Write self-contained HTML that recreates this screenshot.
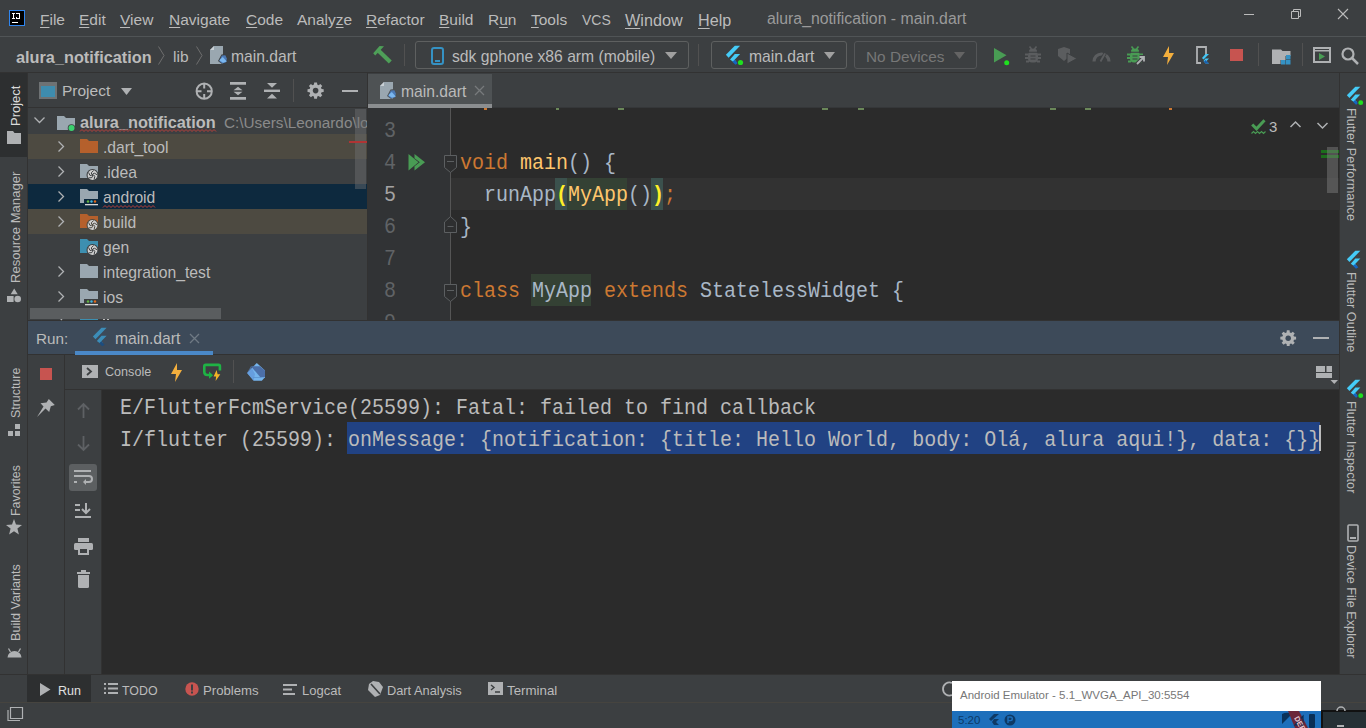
<!DOCTYPE html>
<html><head><meta charset="utf-8">
<style>
*{margin:0;padding:0;box-sizing:border-box}
html,body{width:1366px;height:728px;overflow:hidden;background:#3C3F41;font-family:"Liberation Sans",sans-serif;color:#BBBBBB;position:relative}
.a{position:absolute}
.t{position:absolute;white-space:nowrap;font-size:15px;line-height:18px}
.mono{position:absolute;font-family:"Liberation Mono",monospace;font-size:20px;line-height:32px;white-space:pre;transform-origin:0 20px;transform:translateY(2px) scaleY(1.1)}
svg{position:absolute;overflow:visible}
.menu .t{top:11px;font-size:15.5px}
.menu u{text-decoration:underline;text-underline-offset:2px;text-decoration-thickness:1px}
.vl{position:absolute;white-space:nowrap;font-size:13px;line-height:14px;transform-origin:0 0;transform:rotate(-90deg)}
.vr{position:absolute;white-space:nowrap;font-size:13px;line-height:14px;transform-origin:0 0;transform:rotate(90deg)}
</style></head><body>
<!-- ============ TITLE BAR ============ -->
<div class="a" style="left:0;top:36px;width:1366px;height:1px;background:#505456"></div>
<div class="a" style="left:9px;top:10px;width:16px;height:16px;background:#000;border:1px solid #2F86F0"></div>
<div class="a" style="left:12px;top:13px;width:3px;height:1px;background:#fff"></div>
<div class="a" style="left:13px;top:13px;width:1px;height:6px;background:#fff"></div>
<div class="a" style="left:12px;top:18px;width:3px;height:1px;background:#fff"></div>
<div class="a" style="left:19px;top:13px;width:1px;height:6px;background:#fff"></div>
<div class="a" style="left:16px;top:13px;width:4px;height:1px;background:#fff"></div>
<div class="a" style="left:16px;top:18px;width:4px;height:1px;background:#fff"></div>
<div class="a" style="left:16px;top:17px;width:1px;height:1px;background:#fff"></div>
<div class="a" style="left:12px;top:22px;width:6px;height:1px;background:#fff"></div>
<div class="menu">
<span class="t" style="left:40px"><u>F</u>ile</span>
<span class="t" style="left:79px"><u>E</u>dit</span>
<span class="t" style="left:120px"><u>V</u>iew</span>
<span class="t" style="left:169px"><u>N</u>avigate</span>
<span class="t" style="left:246px"><u>C</u>ode</span>
<span class="t" style="left:297px">Analy<u>z</u>e</span>
<span class="t" style="left:366px"><u>R</u>efactor</span>
<span class="t" style="left:439px"><u>B</u>uild</span>
<span class="t" style="left:488px">R<u>u</u>n</span>
<span class="t" style="left:531px"><u>T</u>ools</span>
<span class="t" style="left:582px;font-size:14px">VCS</span>
<span class="t" style="left:625px;font-size:16.2px"><u>W</u>indow</span>
<span class="t" style="left:698px;font-size:16.2px"><u>H</u>elp</span>
</div>
<span class="t" style="left:767px;top:10px;font-size:15.8px;color:#9A9A9A">alura_notification - main.dart</span>
<div class="a" style="left:1244px;top:14px;width:10px;height:1px;background:#BBBBBB"></div>
<svg style="left:1291px;top:9px" width="10" height="10"><path d="M0.5 2.5h7v7h-7z M2.5 2.5v-2h7v7h-2" fill="none" stroke="#BBBBBB" stroke-width="1"/></svg>
<svg style="left:1338px;top:9px" width="10" height="10"><path d="M0 0L10 10M10 0L0 10" stroke="#BBBBBB" stroke-width="1.1"/></svg>

<!-- ============ NAV TOOLBAR ============ -->
<div class="a" style="left:0;top:72px;width:1366px;height:1px;background:#323232"></div>
<span class="t" style="left:16px;top:48px;font-weight:bold;font-size:16.3px">alura_notification</span>
<svg style="left:158px;top:46px" width="7" height="19"><path d="M0.5 0.5L6 9.5L0.5 18.5" fill="none" stroke="#6E6E6E" stroke-width="1"/></svg>
<span class="t" style="left:173px;top:48px;font-size:15.5px">lib</span>
<svg style="left:196px;top:46px" width="7" height="19"><path d="M0.5 0.5L6 9.5L0.5 18.5" fill="none" stroke="#6E6E6E" stroke-width="1"/></svg>
<svg style="left:210px;top:46px" width="18" height="20"><path d="M4 0h9v18h-13v-14z" fill="#9AA7B0"/><path d="M0 4L4 0v4z" fill="#C9D0D5"/><path d="M11.5 8.5l4-0.5l2 4l-1 4.5l-4.5 1.5l-4-3z" fill="#3C3F41"/><path d="M11.8 9.5l3.5-0.3l1.6 3.4l-0.8 3.6l-3.8 1.2l-3-2.2z" fill="#4C79B5"/><path d="M9.2 14.2l3.6-3.2l4 4.5l-3.8 1.2z" fill="#7AB7EF"/></svg>
<span class="t" style="left:231px;top:48px;font-size:15.7px">main.dart</span>
<!-- hammer -->
<svg style="left:372px;top:45px" width="21" height="20"><path d="M1.2 8.2L7.6 1L12 1.2L9 4.6L3.2 10.5z" fill="#4E9F58"/><path d="M6.6 5.7L18.3 17" stroke="#4E9F58" stroke-width="4.2"/></svg>
<div class="a" style="left:404px;top:44px;width:1px;height:22px;background:#515151"></div>
<!-- device combo -->
<div class="a" style="left:415px;top:41px;width:274px;height:28px;border:1px solid #5E6060;border-radius:3px;background:#3C3F41"></div>
<svg style="left:431px;top:47px" width="13" height="18"><rect x="1" y="1" width="11" height="16" rx="2" fill="none" stroke="#3592C4" stroke-width="2"/><rect x="4" y="13" width="5" height="2" fill="#3592C4"/></svg>
<span class="t" style="left:452px;top:48px;font-size:15.7px">sdk gphone x86 arm (mobile)</span>
<svg style="left:665px;top:52px" width="12" height="7"><path d="M0 0h12L6 7z" fill="#A0A0A0"/></svg>
<div class="a" style="left:698px;top:44px;width:1px;height:22px;background:#515151"></div>
<!-- main.dart combo -->
<div class="a" style="left:711px;top:41px;width:136px;height:28px;border:1px solid #5E6060;border-radius:3px"></div>
<svg style="left:725px;top:45px" width="21" height="22"><g transform="scale(1.0)"><path d="M0.9 9.8L9.8 0.8H15.1L3.6 12.7z" fill="#45CBF7"/><path d="M5 14.4L9.8 9H15.1L9.6 14.8L11.2 16.5L9.8 18z" fill="#45CBF7"/><path d="M7.4 16.7L9.6 14.8L13 18.2L10.5 19.8z" fill="#1565C0"/><circle cx="15.5" cy="17.5" r="3.4" fill="#3C3F41"/><circle cx="15.5" cy="17.5" r="2.6" fill="#1FE01F"/></g></svg>
<span class="t" style="left:749px;top:48px;font-size:15.7px">main.dart</span>
<svg style="left:824px;top:52px" width="11" height="7"><path d="M0 0h11L5.5 7z" fill="#A0A0A0"/></svg>
<!-- no devices -->
<div class="a" style="left:854px;top:41px;width:123px;height:28px;border:1px solid #545658;border-radius:3px"></div>
<span class="t" style="left:866px;top:48px;font-size:15.35px;color:#777777">No Devices</span>
<svg style="left:954px;top:52px" width="11" height="7"><path d="M0 0h11L5.5 7z" fill="#646464"/></svg>
<!-- run -->
<svg style="left:994px;top:48px" width="16" height="17"><path d="M0 0L12.5 7.2L0 14.4z" fill="#499C54"/><circle cx="12.7" cy="14.7" r="2.5" fill="#1FE01F"/></svg>
<!-- debug grey -->
<svg style="left:1025px;top:46px" width="16" height="17"><path d="M4.5 0.5l2 2.5M11.5 0.5l-2 2.5" stroke="#5B5D5F" stroke-width="1.6"/><ellipse cx="8" cy="5" rx="4" ry="2.6" fill="#5B5D5F"/><rect x="3" y="5.5" width="10" height="11" rx="4" fill="#5B5D5F"/><path d="M0 8.5h3.5M12.5 8.5h3.5M0 12h3.5M12.5 12h3.5M1 15.5h3M12 15.5h3" stroke="#5B5D5F" stroke-width="1.8"/><path d="M5.5 10h5M5.5 13h5M3 6.2h10" stroke="#3C3F41" stroke-width="1.1"/></svg>
<!-- coverage -->
<svg style="left:1058px;top:47px" width="20" height="17"><path d="M0 2L6 0L12 2V9L6 14L0 9z" fill="#5B5D5F"/><path d="M9 6L19 11.5L9 17z" fill="#5B5D5F" stroke="#3C3F41" stroke-width="1"/></svg>
<!-- profiler -->
<svg style="left:1092px;top:49px" width="19" height="13"><path d="M2 12.5A7.5 7.5 0 0 1 17 12.5" fill="none" stroke="#5B5D5F" stroke-width="3.2"/><path d="M8.5 12.5l4.5-8" stroke="#3C3F41" stroke-width="3.5"/><path d="M8.5 12.5l4.5-8" stroke="#5B5D5F" stroke-width="1.8"/></svg>
<!-- attach debugger green -->
<svg style="left:1127px;top:46px" width="19" height="19"><path d="M4.5 0.5l2 2.5M11.5 0.5l-2 2.5" stroke="#499C54" stroke-width="1.6"/><ellipse cx="8" cy="5" rx="4" ry="2.6" fill="#499C54"/><rect x="3" y="5.5" width="10" height="11" rx="4" fill="#499C54"/><path d="M0 8.5h3.5M12.5 8.5h3.5M0 12h3.5M12.5 12h3.5M1 15.5h3M12 15.5h3" stroke="#499C54" stroke-width="1.8"/><path d="M5.5 10h5M5.5 13h5M3 6.2h10" stroke="#3C3F41" stroke-width="1.1"/><path d="M10 18L17 11M12.5 11H17V15.5" stroke="#3C3F41" stroke-width="4"/><path d="M10 18L17 11M12.5 11H17V15.5" stroke="#AFB1B3" stroke-width="1.8" fill="none"/></svg>
<!-- lightning -->
<svg style="left:1163px;top:46px" width="12" height="19"><path d="M6 0L0 11h5L4 19L11 7H6z" fill="#F4AF3D"/></svg>
<!-- flutter device -->
<svg style="left:1196px;top:46px" width="14" height="19"><path d="M1 10V1h9v8M1 10v7h4" fill="none" stroke="#AFB1B3" stroke-width="1.8"/><path d="M9.5 8h3.5L7.5 13.5L6 12z" fill="#42C6F5"/><path d="M9.5 12.5h3.5l-2.5 2.5l2.5 2.5H9.5L7.5 15z" fill="#42C6F5"/><path d="M8 15.5l1.5-1.5l3.5 3.5H9.5z" fill="#1A5DAE"/></svg>
<!-- stop -->
<div class="a" style="left:1230px;top:49px;width:13px;height:12px;background:#C75450"></div>
<div class="a" style="left:1258px;top:43px;width:1px;height:23px;background:#515151"></div>
<!-- project structure -->
<svg style="left:1272px;top:48px" width="19" height="17"><path d="M0 1.5h9l1.5 1.5h8v5h-5v4h-5v4H0z" fill="#AFB1B3"/><rect x="14" y="7" width="4.5" height="4.5" fill="#3592C4"/><rect x="9" y="12" width="4.5" height="4.5" fill="#3592C4"/><rect x="14" y="12" width="4.5" height="4.5" fill="#3592C4"/></svg>
<div class="a" style="left:1302px;top:43px;width:1px;height:23px;background:#515151"></div>
<!-- run anything -->
<svg style="left:1313px;top:47px" width="18" height="16"><rect x="1" y="1" width="16" height="14" fill="none" stroke="#AFB1B3" stroke-width="2"/><rect x="1" y="3" width="16" height="1.5" fill="#AFB1B3"/><path d="M6 6L12 9.5L6 13z" fill="#499C54"/></svg>
<!-- search -->
<svg style="left:1341px;top:47px" width="18" height="18"><circle cx="7" cy="7" r="5.5" fill="none" stroke="#AFB1B3" stroke-width="2.2"/><path d="M11 11L17 17" stroke="#AFB1B3" stroke-width="2.5"/></svg>

<!-- ============ LEFT STRIP ============ -->
<div class="a" style="left:0;top:73px;width:27px;height:84px;background:#2D2F30"></div>
<div class="a" style="left:27px;top:73px;width:1px;height:601px;background:#323232"></div>

<!-- ============ PROJECT PANEL ============ -->
<div class="a" style="left:28px;top:107px;width:339px;height:1px;background:#323232"></div>

<!-- ============ EDITOR ============ -->
<div class="a" style="left:367px;top:73px;width:1px;height:247px;background:#323232"></div>
<div class="a" style="left:368px;top:108px;width:82px;height:212px;background:#313335"></div>
<div class="a" style="left:450px;top:108px;width:889px;height:212px;background:#2B2B2B"></div>

<!-- ============ RUN PANEL ============ -->
<div class="a" style="left:28px;top:320px;width:1311px;height:1px;background:#323232"></div>
<div class="a" style="left:28px;top:321px;width:1311px;height:33px;background:#3D4A59"></div>
<div class="a" style="left:28px;top:354px;width:1311px;height:1px;background:#323232"></div>
<div class="a" style="left:102px;top:390px;width:1237px;height:284px;background:#2B2B2B"></div>


<!-- left strip labels -->
<span class="vl" style="left:9px;top:126px;color:#DADADA;font-size:13px">Project</span>
<svg style="left:7px;top:131px" width="14" height="13"><path d="M0 0h6l1.5 2H14v11H0z" fill="#AFB1B3"/></svg>
<span class="vl" style="left:9px;top:283px;font-size:13.1px">Resource Manager</span>
<svg style="left:7px;top:288px" width="15" height="15"><path d="M7.2 0.4L10.7 6.2H3.7z" fill="#AFB1B3"/><rect x="0" y="8" width="6.6" height="6" fill="#AFB1B3"/><circle cx="10.7" cy="11" r="3.3" fill="#AFB1B3"/></svg>
<span class="vl" style="left:9px;top:418px;font-size:12.4px">Structure</span>
<svg style="left:8px;top:424px" width="13" height="13"><rect x="7" y="0" width="5" height="5" fill="#AFB1B3"/><rect x="0" y="7" width="5" height="5" fill="#AFB1B3"/><rect x="7" y="7" width="5" height="5" fill="#AFB1B3"/></svg>
<span class="vl" style="left:9px;top:516px;font-size:12.4px">Favorites</span>
<svg style="left:6px;top:519px" width="16" height="16"><path d="M8 0L10 5.5L16 5.9L11.4 9.6L12.9 15.4L8 12.2L3.1 15.4L4.6 9.6L0 5.9L6 5.5z" fill="#AFB1B3"/></svg>
<span class="vl" style="left:9px;top:641px;font-size:12.6px">Build Variants</span>
<svg style="left:7px;top:645px" width="15" height="13"><path d="M0.5 12.5A7 6.5 0 0 1 14.5 12.5z" fill="#AFB1B3"/><path d="M3.5 7L1.5 3.5M11.5 7L13.5 3.5" stroke="#AFB1B3" stroke-width="1.3"/></svg>

<!-- right strip labels -->
<svg style="left:1346px;top:86px" width="20" height="20"><g transform="scale(0.95)"><path d="M0.9 9.8L9.8 0.8H15.1L3.6 12.7z" fill="#45CBF7"/><path d="M5 14.4L9.8 9H15.1L9.6 14.8L11.2 16.5L9.8 18z" fill="#45CBF7"/><path d="M7.4 16.7L9.6 14.8L13 18.2L10.5 19.8z" fill="#1565C0"/><circle cx="15.5" cy="17.5" r="3.4" fill="#3C3F41"/><circle cx="15.5" cy="17.5" r="2.6" fill="#1FE01F"/></g></svg>
<span class="vr" style="left:1358px;top:108px;font-size:12.8px">Flutter Performance</span>
<svg style="left:1346px;top:250px" width="20" height="20"><g transform="scale(0.95)"><path d="M0.9 9.8L9.8 0.8H15.1L3.6 12.7z" fill="#45CBF7"/><path d="M5 14.4L9.8 9H15.1L9.6 14.8L11.2 16.5L9.8 18z" fill="#45CBF7"/><path d="M7.4 16.7L9.6 14.8L13 18.2L10.5 19.8z" fill="#1565C0"/></g></svg>
<span class="vr" style="left:1358px;top:272px;font-size:12.8px">Flutter Outline</span>
<svg style="left:1346px;top:379px" width="20" height="20"><g transform="scale(0.95)"><path d="M0.9 9.8L9.8 0.8H15.1L3.6 12.7z" fill="#45CBF7"/><path d="M5 14.4L9.8 9H15.1L9.6 14.8L11.2 16.5L9.8 18z" fill="#45CBF7"/><path d="M7.4 16.7L9.6 14.8L13 18.2L10.5 19.8z" fill="#1565C0"/><circle cx="15.5" cy="17.5" r="3.4" fill="#3C3F41"/><circle cx="15.5" cy="17.5" r="2.6" fill="#1FE01F"/></g></svg>
<span class="vr" style="left:1358px;top:401px;font-size:12.8px">Flutter Inspector</span>
<svg style="left:1347px;top:524px" width="12" height="18"><rect x="1" y="1" width="10" height="16" rx="1" fill="none" stroke="#AFB1B3" stroke-width="1.6"/><rect x="3" y="13" width="6" height="2" fill="#AFB1B3"/></svg>
<span class="vr" style="left:1358px;top:545px;font-size:12.7px">Device File Explorer</span>

<!-- project header -->
<svg style="left:39px;top:82px" width="18" height="18"><rect x="0" y="0" width="18" height="17" fill="#6E7274"/><rect x="2" y="4" width="14" height="11" fill="#3E8CAE"/></svg>
<span class="t" style="left:62px;top:82px;font-size:15.5px">Project</span>
<svg style="left:121px;top:88px" width="12" height="7"><path d="M0 0h11L5.5 7z" fill="#AFB1B3"/></svg>
<svg style="left:195px;top:82px" width="19" height="19"><circle cx="9.2" cy="9.2" r="7.6" fill="none" stroke="#AFB1B3" stroke-width="2"/><path d="M9.2 2v4.5M9.2 12v4.5M2 9.2h4.5M12 9.2h4.5" stroke="#AFB1B3" stroke-width="2"/></svg>
<svg style="left:230px;top:82px" width="16" height="18"><path d="M0 1.4h16M0 16.4h16" stroke="#AFB1B3" stroke-width="2.8"/><path d="M3.5 8.2l4.5-3.5l4.5 3.5zM3.5 9.8l4.5 3.5l4.5-3.5z" fill="#AFB1B3"/></svg>
<svg style="left:264px;top:82px" width="16" height="18"><path d="M0 8.8h16" stroke="#AFB1B3" stroke-width="2.4"/><path d="M3 1h10l-5 4.8zM3 16.6h10l-5-4.8z" fill="#AFB1B3"/></svg>
<div class="a" style="left:293px;top:79px;width:1px;height:23px;background:#515151"></div>
<svg style="left:307px;top:82px" width="18" height="18"><path d="M14.58 6.95 L16.68 7.19 L16.68 10.01 L14.58 10.25 L13.99 11.66 L15.31 13.32 L13.32 15.31 L11.66 13.99 L10.25 14.58 L10.01 16.68 L7.19 16.68 L6.95 14.58 L5.54 13.99 L3.88 15.31 L1.89 13.32 L3.21 11.66 L2.62 10.25 L0.52 10.01 L0.52 7.19 L2.62 6.95 L3.21 5.54 L1.89 3.88 L3.88 1.89 L5.54 3.21 L6.95 2.62 L7.19 0.52 L10.01 0.52 L10.25 2.62 L11.66 3.21 L13.32 1.89 L15.31 3.88 L13.99 5.54Z" fill="#AFB1B3"/><circle cx="8.6" cy="8.6" r="2.8" fill="#3C3F41"/><circle cx="8.6" cy="8.6" r="2.8" fill="none" stroke="#3C3F41" stroke-width="0"/></svg>
<div class="a" style="left:342px;top:90px;width:16px;height:2.3px;background:#AFB1B3"></div>

<!-- project tree -->
<div class="a" style="left:28px;top:134px;width:339px;height:25px;background:#4D4A41"></div>
<div class="a" style="left:28px;top:184px;width:339px;height:25px;background:#0D293E"></div>
<div class="a" style="left:28px;top:209px;width:339px;height:25px;background:#4D4A41"></div>
<!-- root -->
<svg style="left:34px;top:117px" width="11" height="7"><path d="M0.5 0.5L5.5 5.5L10.5 0.5" fill="none" stroke="#AFB1B3" stroke-width="1.3"/></svg>
<svg style="left:57px;top:116px" width="19" height="16"><path d="M0 0h7l2 2h9v12H0z" fill="#9AA7B0"/><circle cx="14.5" cy="12" r="3.8" fill="#3C3F41"/><circle cx="14.5" cy="12" r="3" fill="#3BD16F"/></svg>
<span class="t" style="left:80px;top:113px;font-weight:bold;font-size:16.3px">alura_notification</span>
<svg style="left:80px;top:129px" width="136" height="4"><path d="M0 2.5 l2 -2 l2 2 l2 -2 l2 2 l2 -2 l2 2 l2 -2 l2 2 l2 -2 l2 2 l2 -2 l2 2 l2 -2 l2 2 l2 -2 l2 2 l2 -2 l2 2 l2 -2 l2 2 l2 -2 l2 2 l2 -2 l2 2 l2 -2 l2 2 l2 -2 l2 2 l2 -2 l2 2 l2 -2 l2 2 l2 -2 l2 2 l2 -2 l2 2 l2 -2 l2 2 l2 -2 l2 2 l2 -2 l2 2 l2 -2 l2 2 l2 -2 l2 2 l2 -2 l2 2 l2 -2 l2 2 l2 -2 l2 2 l2 -2 l2 2 l2 -2 l2 2 l2 -2 l2 2 l2 -2 l2 2 l2 -2 l2 2 l2 -2 l2 2 l2 -2 l2 2 l2 -2 l2 2" fill="none" stroke="#BC3F3C" stroke-width="1"/></svg>
<div class="a" style="left:224px;top:108px;width:131px;height:25px;overflow:hidden"><span class="t" style="left:0;top:6px;font-size:15.3px;color:#8A8A8A">C:\Users\Leonardo\lo</span></div><div class="a" style="left:355px;top:108px;width:12px;height:25px;overflow:hidden"><span class="t" style="left:-131px;top:6px;font-size:15.3px;color:#8A8A8A">C:\Users\Leonardo\lo</span></div>
<!-- children -->
<svg style="left:58px;top:141px" width="7" height="11"><path d="M0.5 0.5L5.5 5.5L0.5 10.5" fill="none" stroke="#AFB1B3" stroke-width="1.3"/></svg>
<svg style="left:80px;top:139px" width="18" height="14"><path d="M0 0h7l2 2h9v12H0z" fill="#B5602C"/></svg>
<span class="t" style="left:103px;top:139px;font-size:15.7px">.dart_tool</span>

<svg style="left:58px;top:166px" width="7" height="11"><path d="M0.5 0.5L5.5 5.5L0.5 10.5" fill="none" stroke="#AFB1B3" stroke-width="1.3"/></svg>
<svg style="left:80px;top:164px" width="19" height="17"><path d="M0 0h7l2 2h9v12H0z" fill="#9AA7B0"/><circle cx="12.5" cy="11" r="6" fill="#3C3F41"/><circle cx="12.5" cy="11" r="4.9" fill="#D0D0D0"/><path d="M13.70 11.00 Q15.64 11.64 14.17 15.29 M12.87 12.14 Q12.86 14.18 8.94 13.91 M11.53 11.71 Q9.59 12.33 8.63 8.51 M11.53 10.29 Q10.34 8.64 13.67 6.55 M12.87 9.86 Q14.07 8.21 17.09 10.74 " fill="none" stroke="#3C3F41" stroke-width="1"/><circle cx="12.5" cy="11" r="1.1" fill="#3C3F41"/></svg>
<span class="t" style="left:103px;top:164px;font-size:15.7px">.idea</span>

<svg style="left:58px;top:191px" width="7" height="11"><path d="M0.5 0.5L5.5 5.5L0.5 10.5" fill="none" stroke="#AFB1B3" stroke-width="1.3"/></svg>
<svg style="left:80px;top:189px" width="19" height="17"><path d="M0 0h7l2 2h9v12H0z" fill="#9AA7B0"/><rect x="4" y="10" width="15" height="7" fill="#0D293E"/><rect x="5" y="15" width="13" height="1.3" fill="#D6D6D6"/><circle cx="8" cy="12.5" r="1.2" fill="#62B543"/><circle cx="11.5" cy="12.5" r="1.2" fill="#40B6E0"/><circle cx="15" cy="12.5" r="1.2" fill="#E46A1A"/></svg>
<span class="t" style="left:103px;top:189px;font-size:15.7px">android</span>
<svg style="left:103px;top:205px" width="52" height="4"><path d="M0 2.5 l2 -2 l2 2 l2 -2 l2 2 l2 -2 l2 2 l2 -2 l2 2 l2 -2 l2 2 l2 -2 l2 2 l2 -2 l2 2 l2 -2 l2 2 l2 -2 l2 2 l2 -2 l2 2 l2 -2 l2 2 l2 -2 l2 2 l2 -2 l2 2" fill="none" stroke="#BC3F3C" stroke-width="1"/></svg>

<svg style="left:58px;top:216px" width="7" height="11"><path d="M0.5 0.5L5.5 5.5L0.5 10.5" fill="none" stroke="#AFB1B3" stroke-width="1.3"/></svg>
<svg style="left:80px;top:214px" width="19" height="17"><path d="M0 0h7l2 2h9v12H0z" fill="#B5602C"/><circle cx="12.5" cy="11" r="6" fill="#4D4A41"/><circle cx="12.5" cy="11" r="4.9" fill="#D0D0D0"/><path d="M13.70 11.00 Q15.64 11.64 14.17 15.29 M12.87 12.14 Q12.86 14.18 8.94 13.91 M11.53 11.71 Q9.59 12.33 8.63 8.51 M11.53 10.29 Q10.34 8.64 13.67 6.55 M12.87 9.86 Q14.07 8.21 17.09 10.74 " fill="none" stroke="#4D4A41" stroke-width="1"/><circle cx="12.5" cy="11" r="1.1" fill="#4D4A41"/></svg>
<span class="t" style="left:103px;top:214px;font-size:15.7px">build</span>

<svg style="left:80px;top:239px" width="19" height="17"><path d="M0 0h7l2 2h9v12H0z" fill="#3D8FB0"/><circle cx="12.5" cy="11" r="6" fill="#3C3F41"/><circle cx="12.5" cy="11" r="4.9" fill="#D0D0D0"/><path d="M13.70 11.00 Q15.64 11.64 14.17 15.29 M12.87 12.14 Q12.86 14.18 8.94 13.91 M11.53 11.71 Q9.59 12.33 8.63 8.51 M11.53 10.29 Q10.34 8.64 13.67 6.55 M12.87 9.86 Q14.07 8.21 17.09 10.74 " fill="none" stroke="#3C3F41" stroke-width="1"/><circle cx="12.5" cy="11" r="1.1" fill="#3C3F41"/></svg>
<span class="t" style="left:103px;top:239px;font-size:15.7px">gen</span>

<svg style="left:58px;top:266px" width="7" height="11"><path d="M0.5 0.5L5.5 5.5L0.5 10.5" fill="none" stroke="#AFB1B3" stroke-width="1.3"/></svg>
<svg style="left:80px;top:264px" width="18" height="14"><path d="M0 0h7l2 2h9v12H0z" fill="#9AA7B0"/></svg>
<span class="t" style="left:103px;top:264px;font-size:15.7px">integration_test</span>

<svg style="left:58px;top:291px" width="7" height="11"><path d="M0.5 0.5L5.5 5.5L0.5 10.5" fill="none" stroke="#AFB1B3" stroke-width="1.3"/></svg>
<svg style="left:80px;top:289px" width="19" height="17"><path d="M0 0h7l2 2h9v12H0z" fill="#9AA7B0"/><rect x="4" y="10" width="15" height="7" fill="#3C3F41"/><rect x="5" y="15" width="13" height="1.3" fill="#D6D6D6"/><circle cx="8" cy="12.5" r="1.2" fill="#62B543"/><circle cx="11.5" cy="12.5" r="1.2" fill="#40B6E0"/><circle cx="15" cy="12.5" r="1.2" fill="#E46A1A"/></svg>
<span class="t" style="left:103px;top:289px;font-size:15.7px">ios</span>
<!-- lib partially -->
<svg style="left:58px;top:316px" width="7" height="4"><path d="M0.5 0.5L4 4" fill="none" stroke="#AFB1B3" stroke-width="1.3"/></svg>
<div class="a" style="left:80px;top:314px;width:18px;height:6px;background:#3D8FB0"></div>
<span class="a" style="left:103px;top:316px;width:12px;height:4px;overflow:hidden"><span class="a" style="left:0;top:0;width:2px;height:4px;background:#BBBBBB"></span><span class="a" style="left:4px;top:0;width:2px;height:4px;background:#BBBBBB"></span></span>
<!-- scrollbars -->
<div class="a" style="left:355px;top:109px;width:11px;height:80px;background:rgba(110,113,115,0.45)"></div>
<div class="a" style="left:349px;top:141px;width:18px;height:2px;background:#B03434"></div>
<div class="a" style="left:30px;top:308px;width:191px;height:11px;background:#5A5D5F"></div>
<!-- ============ BOTTOM ============ -->
<div class="a" style="left:0;top:674px;width:1366px;height:1px;background:#323232"></div>
<div class="a" style="left:0;top:702px;width:1366px;height:1px;background:#46443F"></div>
<div class="a" style="left:1339px;top:73px;width:1px;height:601px;background:#323232"></div>

<!-- editor tabs -->
<div class="a" style="left:368px;top:74px;width:124px;height:34px;background:#4E5254"></div>
<div class="a" style="left:368px;top:104px;width:124px;height:4px;background:#8B8E90"></div>
<svg style="left:380px;top:82px" width="17" height="20"><path d="M4 0h9v17H0V4z" fill="#9AA7B0"/><path d="M0 4L4 0v4z" fill="#C9D0D5"/><path d="M10.5 7.5l4-0.5l2 4l-1 4.5l-4.5 1.5l-4-3z" fill="#4E5254"/><path d="M10.8 8.5l3.5-0.3l1.6 3.4l-0.8 3.6l-3.8 1.2l-3-2.2z" fill="#4C79B5"/><path d="M8.2 13.2l3.6-3.2l4 4.5l-3.8 1.2z" fill="#7AB7EF"/></svg>
<span class="t" style="left:401px;top:83px;font-size:15.7px">main.dart</span>
<svg style="left:475px;top:86px" width="10" height="10"><path d="M0 0L9 9M9 0L0 9" stroke="#777A7C" stroke-width="1.3"/></svg>

<!-- editor gutter/code -->
<div class="a" style="left:450px;top:178px;width:889px;height:32px;background:#323232"></div>
<div class="a" style="left:450px;top:108px;width:1px;height:212px;background:#555555"></div>
<div class="a" style="left:492px;top:107px;width:847px;height:1px;background:#353739"></div>
<!-- line 2 remnants -->
<div class="a" style="left:484px;top:108px;width:3px;height:1.5px;background:#CC7832"></div>
<div class="a" style="left:556px;top:108px;width:3px;height:1.5px;background:#6A8759"></div>
<div class="a" style="left:618px;top:108px;width:6px;height:1.5px;background:#6A8759"></div>
<div class="a" style="left:822px;top:108px;width:6px;height:1.5px;background:#6A8759"></div>
<div class="a" style="left:858px;top:108px;width:6px;height:1.5px;background:#6A8759"></div>
<div class="a" style="left:1050px;top:108px;width:6px;height:1.5px;background:#6A8759"></div>
<div class="a" style="left:1085px;top:108px;width:6px;height:1.5px;background:#6A8759"></div>
<div class="a" style="left:1169px;top:108px;width:3px;height:1.5px;background:#CC7832"></div>
<div class="mono" style="left:384px;top:114px;color:#606366">3</div>
<div class="mono" style="left:384px;top:146px;color:#606366">4</div>
<div class="mono" style="left:384px;top:178px;color:#A4A3A3">5</div>
<div class="mono" style="left:384px;top:210px;color:#606366">6</div>
<div class="mono" style="left:384px;top:242px;color:#606366">7</div>
<div class="mono" style="left:384px;top:274px;color:#606366">8</div>
<div class="a" style="left:368px;top:306px;width:971px;height:14px;overflow:hidden"><div class="mono" style="left:16px;top:0;color:#606366">9</div></div>
<!-- run gutter icon -->
<svg style="left:408px;top:154px" width="18" height="17"><path d="M0.5 0L10.5 8.2L0.5 16.4z" fill="#499C54"/><path d="M6.5 0L17 8.2L6.5 16.4V12.2L11.8 8.2L6.5 4.2z" fill="#499C54"/></svg>
<!-- fold markers -->
<svg style="left:444px;top:155px" width="13" height="18"><path d="M0.5 0.5h12v12l-6 5l-6-5z" fill="#2E2F30" stroke="#5C5F61" stroke-width="1"/><path d="M3 6.5h7" stroke="#5C5F61" stroke-width="1"/></svg>
<svg style="left:444px;top:216px" width="13" height="18"><path d="M0.5 16.5h12v-10.5l-6-5.5l-6 5.5z" fill="#2E2F30" stroke="#5C5F61" stroke-width="1"/><path d="M3.5 10.5h6" stroke="#5C5F61" stroke-width="1"/></svg>
<svg style="left:444px;top:284px" width="13" height="18"><path d="M0.5 0.5h12v12l-6 5l-6-5z" fill="#2E2F30" stroke="#5C5F61" stroke-width="1"/><path d="M3 6.5h7" stroke="#5C5F61" stroke-width="1"/></svg>
<!-- code -->
<div class="mono" style="left:460px;top:146px;color:#A9B7C6"><span style="color:#CC7832">void</span> <span style="color:#FFC66D">main</span>() {</div>
<div class="a" style="left:555px;top:178px;width:12px;height:32px;background:#3B514D"></div>
<div class="a" style="left:567px;top:178px;width:60px;height:32px;background:#344134"></div>
<div class="a" style="left:651px;top:178px;width:12px;height:32px;background:#3B514D"></div>
<div class="mono" style="left:460px;top:178px;color:#A9B7C6">  runApp<span style="color:#FFEF28;font-weight:bold">(</span><span style="color:#FFC66D">MyApp</span>()<span style="color:#FFEF28;font-weight:bold">)</span><span style="color:#CC7832">;</span></div>
<div class="mono" style="left:460px;top:210px;color:#A9B7C6">}</div>
<div class="a" style="left:531px;top:274px;width:60px;height:32px;background:#344134"></div>
<div class="mono" style="left:460px;top:274px;color:#A9B7C6"><span style="color:#CC7832">class</span> MyApp <span style="color:#CC7832">extends</span> StatelessWidget {</div>
<!-- editor top-right -->
<svg style="left:1251px;top:119px" width="16" height="16"><path d="M1.2 5.5L5.5 9.8L13.5 1.2" fill="none" stroke="#499C54" stroke-width="3"/><path d="M0.5 14.5l2-2l2 2l2-2l2 2l2-2l2 2l2-2" fill="none" stroke="#499C54" stroke-width="1.1"/></svg>
<span class="t" style="left:1269px;top:118px;font-size:15px">3</span>
<svg style="left:1290px;top:121px" width="11" height="7"><path d="M0.5 6L5.5 1L10.5 6" fill="none" stroke="#AFB1B3" stroke-width="1.5"/></svg>
<svg style="left:1317px;top:122px" width="11" height="7"><path d="M0.5 1L5.5 6L10.5 1" fill="none" stroke="#AFB1B3" stroke-width="1.5"/></svg>
<div class="a" style="left:1321px;top:150px;width:18px;height:3px;background:#1C6E1C"></div>
<div class="a" style="left:1321px;top:155px;width:18px;height:3px;background:#1C6E1C"></div>
<div class="a" style="left:1327px;top:147px;width:11px;height:46px;background:rgba(130,130,130,0.45)"></div>

<!-- ============ RUN PANEL CONTENT ============ -->
<span class="t" style="left:36px;top:330px;font-size:15.25px">Run:</span>
<svg style="left:92px;top:327px" width="17" height="21"><g transform="scale(0.97)"><path d="M0.9 9.8L9.8 0.8H15.1L3.6 12.7z" fill="#3C8DB8"/><path d="M5 14.4L9.8 9H15.1L9.6 14.8L11.2 16.5L9.8 18z" fill="#3C8DB8"/><path d="M7.4 16.7L9.6 14.8L13 18.2L10.5 19.8z" fill="#1D4D7E"/></g></svg>
<span class="t" style="left:115px;top:330px;font-size:15.7px">main.dart</span>
<svg style="left:190px;top:334px" width="10" height="10"><path d="M0 0L9 9M9 0L0 9" stroke="#6F7A84" stroke-width="1.3"/></svg>
<div class="a" style="left:75px;top:351px;width:138px;height:4px;background:#4A88C7"></div>
<svg style="left:1280px;top:330px" width="18" height="18"><path d="M13.98 6.60 L16.08 6.82 L16.08 9.58 L13.98 9.80 L13.42 11.16 L14.75 12.80 L12.80 14.75 L11.16 13.42 L9.80 13.98 L9.58 16.08 L6.82 16.08 L6.60 13.98 L5.24 13.42 L3.60 14.75 L1.65 12.80 L2.98 11.16 L2.42 9.80 L0.32 9.58 L0.32 6.82 L2.42 6.60 L2.98 5.24 L1.65 3.60 L3.60 1.65 L5.24 2.98 L6.60 2.42 L6.82 0.32 L9.58 0.32 L9.80 2.42 L11.16 2.98 L12.80 1.65 L14.75 3.60 L13.42 5.24Z" fill="#AFB1B3"/><circle cx="8.2" cy="8.2" r="2.7" fill="#3D4A59"/><circle cx="8.2" cy="8.2" r="2.7" fill="none" stroke="#3D4A59" stroke-width="0"/></svg>
<div class="a" style="left:1313px;top:337px;width:16px;height:2px;background:#AFB1B3"></div>
<!-- left col -->
<div class="a" style="left:64px;top:355px;width:1px;height:319px;background:#323232"></div>
<div class="a" style="left:40px;top:368px;width:12.4px;height:12.4px;background:#C75450"></div>
<svg style="left:36px;top:398px" width="20" height="20"><path d="M12.8 1L18.8 7L14.8 8.2L13.2 14L9.5 10.5L1 19L7.5 8.5L4.5 5.3L10.5 4.5z" fill="#AFB1B3"/></svg>
<!-- console toolbar -->
<div class="a" style="left:65px;top:389px;width:1274px;height:1px;background:#323232"></div>
<svg style="left:82px;top:365px" width="16" height="14"><rect x="0" y="0" width="16" height="13" fill="#AFB1B3"/><path d="M5 3L9 6.5L5 10" fill="none" stroke="#3C3F41" stroke-width="1.8"/></svg>
<span class="t" style="left:105px;top:363px;font-size:12.6px">Console</span>
<svg style="left:171px;top:363px" width="12" height="19"><path d="M6 0L0 11h5L4 19L11 7H6z" fill="#F4AF3D"/></svg>
<svg style="left:203px;top:364px" width="19" height="19"><path d="M16.9 6.6V2.2Q16.9 0.9 15.6 0.9H2.6Q1.3 0.9 1.3 2.2V8Q1.3 11 4.3 11H7" fill="none" stroke="#1FB345" stroke-width="2.6"/><path d="M6 7.6L10.1 11.2L6 14.8z" fill="#1FB345"/><path d="M13.6 6L10.6 12.5H13.1L12.6 17.1L17.3 10.3H14.6z" fill="#F4B526"/></svg>
<div class="a" style="left:233px;top:360px;width:1px;height:23px;background:#515151"></div>
<svg style="left:246px;top:362px" width="20" height="20"><path d="M1.1 10.9L10.8 1L19 8.6V15.3L15.8 18.8H7.6z" fill="#75B4EC"/><path d="M4.9 4.2H13.7L19 8.6V15.3H14.3z" fill="#4C6FA8"/><path d="M1.1 10.9L4.9 4.2L9 12L7.6 18.8z" fill="#5C8FD6" opacity="0.6"/><path d="M7 15.5H15.5" stroke="#5A93CF" stroke-width="0.8"/></svg>
<svg style="left:1316px;top:366px" width="23" height="19"><rect x="0" y="0" width="9" height="6" fill="#AFB1B3"/><rect x="10.5" y="0" width="5.5" height="6" fill="#AFB1B3"/><rect x="0" y="7" width="16" height="5" fill="#AFB1B3"/><path d="M14.5 14h7.5l-3.75 4z" fill="#AFB1B3"/></svg>
<!-- col2 -->
<div class="a" style="left:101px;top:390px;width:1px;height:284px;background:#323232"></div>
<svg style="left:77px;top:403px" width="13" height="15"><path d="M6.5 1V15M1 6.5L6.5 1L12 6.5" fill="none" stroke="#5E6164" stroke-width="1.8"/></svg>
<svg style="left:77px;top:436px" width="13" height="15"><path d="M6.5 0V14M1 8.5L6.5 14L12 8.5" fill="none" stroke="#5E6164" stroke-width="1.8"/></svg>
<div class="a" style="left:69px;top:464px;width:28px;height:27px;background:#5C5F61;border-radius:3px"></div>
<svg style="left:74px;top:470px" width="18" height="16"><path d="M0 1h17M0 6h15a3 3 0 0 1 0 6h-5" fill="none" stroke="#AFB1B3" stroke-width="2"/><path d="M9 12l3-3v6z" fill="#AFB1B3"/><path d="M0 12h3" stroke="#AFB1B3" stroke-width="2"/></svg>
<svg style="left:75px;top:503px" width="16" height="15"><path d="M0 2h5M0 7h5M0 14h16M11 0v10M7 6l4 4l4-4" fill="none" stroke="#AFB1B3" stroke-width="2"/></svg>
<svg style="left:74px;top:538px" width="19" height="17"><rect x="4" y="0" width="11" height="4" fill="#AFB1B3"/><rect x="0" y="5" width="19" height="7" rx="1.5" fill="#AFB1B3"/><rect x="4" y="10" width="11" height="7" fill="#AFB1B3"/><rect x="6" y="11" width="7" height="4" fill="#3C3F41"/></svg>
<svg style="left:77px;top:570px" width="13" height="18"><rect x="0" y="2" width="13" height="2" fill="#AFB1B3"/><rect x="4" y="0" width="5" height="2" fill="#AFB1B3"/><path d="M1 5h11v11.5a1.5 1.5 0 0 1-1.5 1.5h-8A1.5 1.5 0 0 1 1 16.5z" fill="#AFB1B3"/></svg>
<!-- console text -->
<div class="a" style="left:347px;top:422px;width:973px;height:32px;background:#214283"></div>
<div class="mono" style="left:120px;top:391px;color:#BBBBBB">E/FlutterFcmService(25599): Fatal: failed to find callback</div>
<div class="mono" style="left:120px;top:423px;color:#BBBBBB">I/flutter (25599): onMessage: {notification: {title: Hello World, body: Olá, alura aqui!}, data: {}}</div>
<div class="a" style="left:1319px;top:425px;width:2px;height:26px;background:#BBBBBB"></div>

<!-- ============ BOTTOM STRIP ============ -->
<div class="a" style="left:27px;top:675px;width:64px;height:27px;background:#2D2F30"></div>
<svg style="left:40px;top:683px" width="11" height="13"><path d="M0 0L10.5 6.5L0 13z" fill="#AFB1B3"/></svg>
<span class="t" style="left:58px;top:682px;font-size:12.5px;color:#E0E0E0">Run</span>
<svg style="left:104px;top:683px" width="14" height="12"><path d="M0 1h2M0 5.5h2M0 10h2M4 1h10M4 5.5h10M4 10h10" stroke="#AFB1B3" stroke-width="2"/></svg>
<span class="t" style="left:122px;top:682px;font-size:12.4px">TODO</span>
<svg style="left:185px;top:682px" width="14" height="14"><circle cx="7" cy="7" r="6.7" fill="#C75450"/><rect x="6" y="2.5" width="2" height="6" fill="#3C3F41"/><rect x="6" y="9.5" width="2" height="2" fill="#3C3F41"/></svg>
<span class="t" style="left:203px;top:682px;font-size:13.2px">Problems</span>
<svg style="left:283px;top:684px" width="14" height="12"><path d="M0 1h14M0 5.5h9M0 10h12" stroke="#AFB1B3" stroke-width="2"/></svg>
<span class="t" style="left:302px;top:682px;font-size:13px">Logcat</span>
<svg style="left:368px;top:681px" width="15" height="16"><path d="M5 0L11 1L15 6L12 14L7 16L0 9L1 3z" fill="#AFB1B3"/><path d="M3 3L12 13" stroke="#3C3F41" stroke-width="1.6"/></svg>
<span class="t" style="left:387px;top:682px;font-size:12.8px">Dart Analysis</span>
<svg style="left:488px;top:682px" width="15" height="13"><rect x="0" y="0" width="15" height="13" fill="#AFB1B3"/><path d="M3 3L6 5.5L3 8M7 10h5" fill="none" stroke="#3C3F41" stroke-width="1.4"/></svg>
<span class="t" style="left:507px;top:682px;font-size:13.3px">Terminal</span>
<!-- status bar icon -->
<svg style="left:6px;top:707px" width="17" height="16"><path d="M4.5 0.5h12v11h-12z" fill="none" stroke="#AFB1B3" stroke-width="1.2"/><path d="M2 3v10.5h12" fill="none" stroke="#AFB1B3" stroke-width="1.2"/></svg>
<!-- event log partially hidden circle -->
<svg style="left:941px;top:681px" width="14" height="16"><path d="M11 2A6.5 6.5 0 1 0 11 14" fill="none" stroke="#AFB1B3" stroke-width="1.8"/></svg>
<!-- emulator popup -->
<div class="a" style="left:952px;top:681px;width:369px;height:30px;background:#FFFFFF"></div>
<span class="t" style="left:960px;top:687px;font-size:11.5px;line-height:16px;color:#777777">Android Emulator - 5.1_WVGA_API_30:5554</span>
<div class="a" style="left:952px;top:711px;width:369px;height:17px;background:#1D6FBB;overflow:hidden">
<span class="t" style="left:6px;top:1px;font-size:11.5px;line-height:16px;color:#0E3A66">5:20</span>
<svg style="left:37px;top:3px" width="11" height="12"><path d="M5 0h5L2 7L0 5z M5 5h5L7 8l3 3H5L3 8z" fill="#0E3A66"/></svg>
<svg style="left:52px;top:3px" width="12" height="12"><circle cx="6" cy="6" r="5.5" fill="#0E3A66"/><path d="M4 9V3h2.5a1.8 1.8 0 0 1 0 3.6H4" fill="none" stroke="#1D6FBB" stroke-width="1.4"/></svg>
<svg style="left:326px;top:0px" width="43" height="17"><path d="M4 13L14 3A11 11 0 0 0 4 3z" fill="#0A2F55" opacity="0.95"/><path d="M10 0h11l9 17H17z" fill="#6B2639"/><path d="M17 14l8-9v9z" fill="none" stroke="#0A2F55" stroke-width="1.2"/><rect x="31" y="3" width="6" height="14" rx="1" fill="#0A2F55"/><text x="16" y="7" font-size="7.5" font-weight="bold" fill="#E6C9D2" font-family="Liberation Sans" transform="rotate(62 16 7)">DEB</text></svg>
</div>
<div class="a" style="left:1321px;top:710px;width:45px;height:18px;background:#263035;border-top:2px solid #111;border-left:2px solid #111"></div>
<div class="a" style="left:1337px;top:725px;width:7px;height:1.5px;background:#AFB1B3"></div>
<svg style="left:1336px;top:706px" width="10" height="5"><path d="M1 5A4 4 0 0 1 9 5" fill="none" stroke="#AFB1B3" stroke-width="1.5"/></svg>
</body></html>
